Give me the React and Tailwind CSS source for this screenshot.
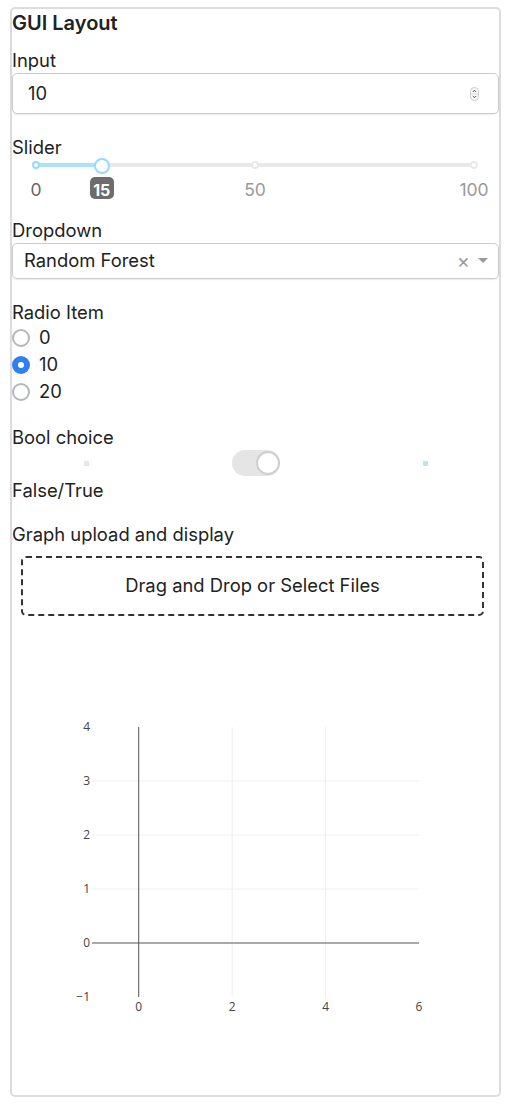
import React from 'react';

const font = { fontFamily: 'Inter, "Noto Sans", sans-serif' };

function Spinner() {
  return (
    <svg width="9" height="14" viewBox="0 0 9 14">
      <rect x="0.5" y="0.5" width="8" height="13" rx="4" fill="#fff" stroke="#c8c8c8" />
      <line x1="1" y1="7" x2="8" y2="7" stroke="#d8d8d8" />
      <path d="M2.8 5 L4.5 3.3 L6.2 5" fill="none" stroke="#444" strokeWidth="1" />
      <path d="M2.8 9 L4.5 10.7 L6.2 9" fill="none" stroke="#444" strokeWidth="1" />
    </svg>
  );
}

// rc-slider look: rail, marks, handle and tooltip sit on the value axis
function Slider() {
  const value = 15;
  const marks = [0, 50, 100];
  const left = 24;
  const width = 438;
  const pos = (v) => left + (v / 100) * width;
  return (
    <div className="relative h-[46px]">
      <div className="absolute top-[4px] h-[4px] rounded-full bg-[#e9e9e9]" style={{ left: left, width: width }} />
      <div className="absolute top-[4px] h-[4px] rounded-full bg-[#abe2fb]" style={{ left: left, width: pos(value) - left }} />
      {marks.map((m) => (
        <div
          key={m}
          className={`absolute top-[2px] w-[8px] h-[8px] rounded-full bg-white border-2 ${m <= value ? 'border-[#96dbfa]' : 'border-[#e9e9e9]'}`}
          style={{ left: pos(m) - 4 }}
        />
      ))}
      <div
        className="absolute top-[-1px] w-[16px] h-[16px] rounded-full bg-white border-2 border-[#96dbfa]"
        style={{ left: pos(value) - 8 }}
      />
      {marks.map((m) => (
        <span
          key={'l' + m}
          className={`absolute top-[21px] text-[17.5px] leading-[20px] -translate-x-1/2 ${m <= value ? 'text-[#666]' : 'text-[#999]'}`}
          style={{ left: pos(m) }}
        >
          {m}
        </span>
      ))}
      <div
        className="absolute top-[18px] w-[24px] h-[22px] rounded-[5px] bg-[#6c6c6c] text-white font-bold text-[16px] leading-[18px] flex items-end justify-center"
        style={{ left: pos(value) - 12 }}
      >
        15
      </div>
    </div>
  );
}

function Radio({ label, checked }) {
  return (
    <div className="flex items-center h-[27px]">
      {checked ? (
        <span className="w-[18px] h-[18px] rounded-full bg-[#2f7ff0] flex items-center justify-center">
          <span className="w-[6px] h-[6px] rounded-full bg-white" />
        </span>
      ) : (
        <span className="w-[18px] h-[18px] rounded-full border-2 border-[#b3b7bd] bg-white" />
      )}
      <span className="ml-[9px]">{label}</span>
    </div>
  );
}

function Graph() {
  const x0 = 80, x1 = 407, yt = 100, yb = 370;
  const sx = (v) => x0 + ((v + 1) / 7) * (x1 - x0);
  const sy = (v) => yt + ((4 - v) / 5) * (yb - yt);
  return (
    <svg width="487" height="450" className="block" style={{ fontFamily: '"Open Sans", sans-serif' }}>
      {[1, 2, 3].map((v) => (
        <line key={'h' + v} x1={x0} x2={x1} y1={sy(v)} y2={sy(v)} stroke="#eee" strokeWidth="1" />
      ))}
      {[2, 4].map((v) => (
        <line key={'v' + v} x1={sx(v)} x2={sx(v)} y1={sy(4)} y2={sy(-1)} stroke="#eee" strokeWidth="1" />
      ))}
      <line x1={x0} x2={x1} y1={sy(0)} y2={sy(0)} stroke="#8c8c8c" strokeWidth="1.5" />
      <line x1={sx(0)} x2={sx(0)} y1={sy(4)} y2={sy(-1)} stroke="#555" strokeWidth="1" />
      {[4, 3, 2, 1, 0, -1].map((v) => (
        <text key={'yl' + v} x={x0 - 2} y={sy(v) + 4} textAnchor="end" fontSize="12" fill="#444">
          {v < 0 ? '\u2212' + Math.abs(v) : v}
        </text>
      ))}
      {[0, 2, 4, 6].map((v) => (
        <text key={'xl' + v} x={sx(v)} y={sy(-1) + 14} textAnchor="middle" fontSize="12" fill="#444">
          {v}
        </text>
      ))}
    </svg>
  );
}

export default function App() {
  return (
    <div className="bg-white min-h-[1112px] pt-[7px]" style={font}>
      <div className="ml-[10px] w-[491px] border-2 border-[#dcdcdc] rounded-[5px] pb-[18px] text-[#222] text-[18.4px]">
        <h1 className="font-semibold text-[20px] leading-[28px]">GUI Layout</h1>

        <div className="mt-[11px] leading-[24px]">Input</div>
        <div className="mt-[1px] h-[41px] border border-[#ccc] rounded-[5px] shadow-[0_1px_1px_rgba(0,0,0,0.08)] flex items-center justify-between pl-[15px] pr-[19px]">
          <span>10</span>
          <Spinner />
        </div>

        <div className="mt-[21px] leading-[24px]">Slider</div>
        <Slider />

        <div className="mt-[13px] leading-[24px]">Dropdown</div>
        <div className="mt-[1px] h-[36px] border border-[#ccc] rounded-[5px] shadow-[0_1px_1px_rgba(0,0,0,0.08)] flex items-center pl-[11px] pr-[10px]">
          <span className="flex-1">Random Forest</span>
          <span className="text-[#999] text-[20px] leading-none mr-[8px]">×</span>
          <svg width="10" height="6" viewBox="0 0 10 6">
            <path d="M0 0 L10 0 L5 5 Z" fill="#999" />
          </svg>
        </div>

        <div className="mt-[21px] leading-[24px]">Radio Item</div>
        <div className="flex flex-col">
          <Radio label="0" />
          <Radio label="10" checked />
          <Radio label="20" />
        </div>

        <div className="mt-[20px] leading-[24px]">Bool choice</div>
        <div className="mt-[1px] h-[26px] flex items-center pl-[72px]">
          <span className="w-[5px] h-[5px] bg-[#e6e6e6]" />
          <div className="ml-[143px] w-[48px] h-[26px] rounded-full bg-[#e5e5e5] flex items-center justify-end">
            <span className="w-[24px] h-[24px] rounded-full bg-white border-2 border-[#cfcfcf]" />
          </div>
          <span className="ml-[143px] w-[5px] h-[5px] bg-[#b9e3fb]" />
        </div>
        <div className="mt-[2px] leading-[24px]">False/True</div>

        <div className="mt-[20px] leading-[24px]">Graph upload and display</div>
        <div className="mt-[10px] ml-[9px] w-[463px] h-[60px] border-2 border-dashed border-[#333] rounded-[5px] flex items-center justify-center">
          Drag and Drop or Select Files
        </div>

        <div className="mt-[11px]">
          <Graph />
        </div>
      </div>
    </div>
  );
}
